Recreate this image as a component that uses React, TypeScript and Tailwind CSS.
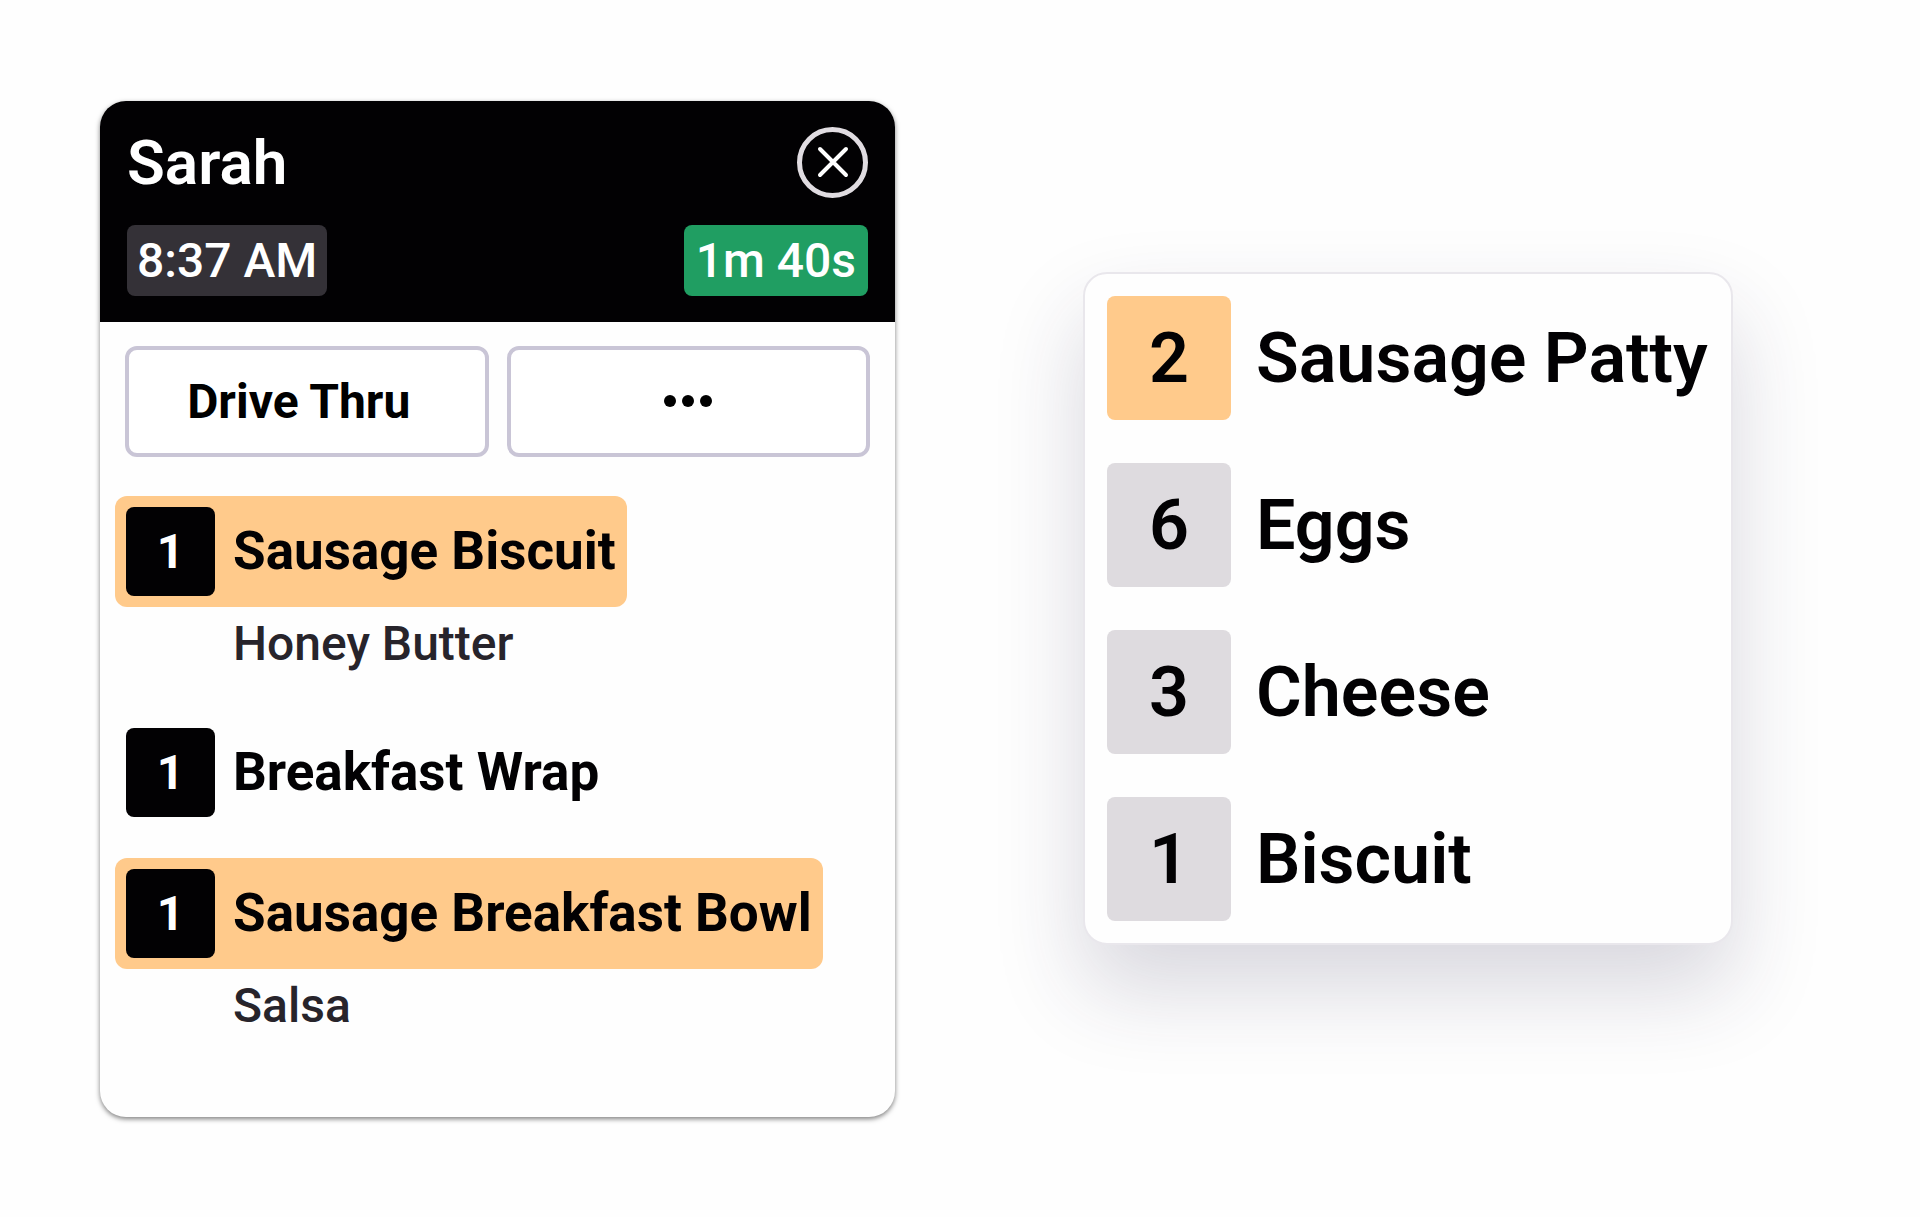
type OrderItem = {
  quantity: number;
  name: string;
  modifier?: string;
  highlighted?: boolean;
};

type SummaryItem = {
  count: number;
  name: string;
  highlighted?: boolean;
};

const orderItems: OrderItem[] = [
  { quantity: 1, name: "Sausage Biscuit", modifier: "Honey Butter", highlighted: true },
  { quantity: 1, name: "Breakfast Wrap" },
  { quantity: 1, name: "Sausage Breakfast Bowl", modifier: "Salsa", highlighted: true },
];

const summaryItems: SummaryItem[] = [
  { count: 2, name: "Sausage Patty", highlighted: true },
  { count: 6, name: "Eggs" },
  { count: 3, name: "Cheese" },
  { count: 1, name: "Biscuit" },
];

const actionClass =
  "flex h-[111px] items-center justify-center rounded-xl border-4 border-[#c9c5d6] bg-white text-[48px] leading-[103px] font-bold text-black";

function OrderHeader() {
  return (
    <header className="flex flex-col gap-[27px] bg-[#020103] px-[27px] py-[26px] text-white">
      <div className="flex items-center justify-between">
        <h1 className="text-[62px] leading-[71px] font-semibold">Sarah</h1>
        <button
          type="button"
          aria-label="Close order"
          className="flex size-[71px] items-center justify-center rounded-full border-5 border-[#e0dce1]"
        >
          <svg viewBox="0 0 32 32" className="size-8" fill="none" stroke="white" strokeWidth="4" strokeLinecap="round">
            <path d="M3 3 29 29M29 3 3 29" />
          </svg>
        </button>
      </div>
      <div className="flex items-center justify-between text-[48px] leading-[71px] font-medium">
        <time className="rounded-lg bg-[#343137] px-2.5">8:37 AM</time>
        <span className="rounded-lg bg-[#209e62] px-3">1m 40s</span>
      </div>
    </header>
  );
}

function OrderRow({ item }: { item: OrderItem }) {
  return (
    <li className="flex flex-col items-start">
      <div
        className={`flex items-center gap-[18px] rounded-xl p-[11px] leading-[89px] font-bold ${item.highlighted ? "bg-[#ffca8b]" : ""}`}
      >
        <span className="size-[89px] rounded-lg bg-[#020103] text-center text-[48px] text-white">
          {item.quantity}
        </span>
        <span className="text-[53px]">{item.name}</span>
      </div>
      {item.modifier && (
        <p className="pb-[7px] pl-[118px] text-[48px] leading-[73px] font-medium text-[#27242b]">{item.modifier}</p>
      )}
    </li>
  );
}

function OrderCard() {
  return (
    <article className="overflow-hidden rounded-[26px] bg-[#fefefe] shadow-[0_2px_5px_rgba(0,0,0,0.5)]">
      <OrderHeader />
      <div className="grid grid-cols-2 gap-[18px] px-[25px] pt-6">
        <button type="button" className={`${actionClass} pr-4`}>
          Drive Thru
        </button>
        <button type="button" aria-label="More actions" className={actionClass}>
          <svg viewBox="0 0 48 12" className="h-3 w-12" fill="currentColor">
            <circle cx="6" cy="6" r="6" />
            <circle cx="24" cy="6" r="6" />
            <circle cx="42" cy="6" r="6" />
          </svg>
        </button>
      </div>
      <ul className="flex flex-col gap-[30px] px-[15px] pt-[39px] pb-[68px]">
        {orderItems.map((item) => (
          <OrderRow key={item.name} item={item} />
        ))}
      </ul>
    </article>
  );
}

function SummaryCard() {
  return (
    <ul className="flex flex-col gap-[43px] rounded-3xl border-2 border-[#e9e7ec] bg-[#fefefe] p-[22px] shadow-[0_44px_88px_rgba(45,38,80,0.18)]">
      {summaryItems.map((item) => (
        <li key={item.name} className="flex items-center gap-[25px] text-[70px] leading-[125px] font-semibold">
          <span
            className={`size-[124px] shrink-0 rounded-lg text-center ${item.highlighted ? "bg-[#ffca8b]" : "bg-[#dedbdf]"}`}
          >
            {item.count}
          </span>
          <span className="h-[124px] whitespace-nowrap">{item.name}</span>
        </li>
      ))}
    </ul>
  );
}

export default function App() {
  return (
    <main className="grid min-h-screen grid-cols-[795fr_650fr] items-center gap-[188px] bg-[#fefefe] pr-[187px] pl-[100px] font-['Roboto',sans-serif] text-[#020103]">
      <OrderCard />
      <SummaryCard />
    </main>
  );
}
